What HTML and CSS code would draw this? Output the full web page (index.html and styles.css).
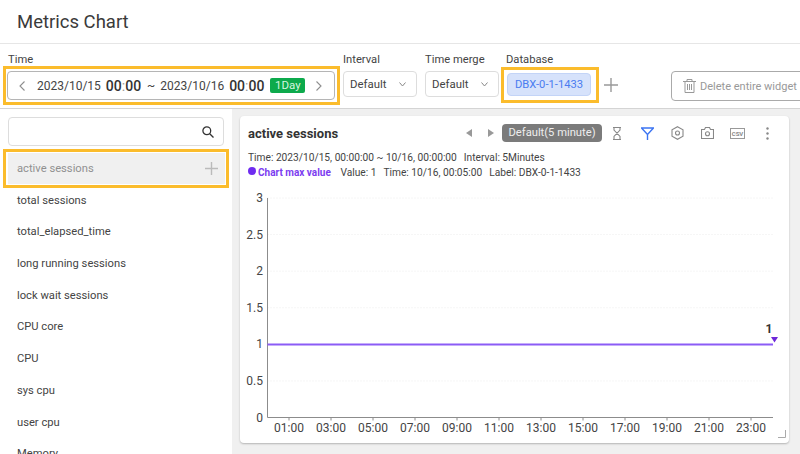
FILE: index.html
```html
<!DOCTYPE html>
<html lang="en">
<head>
    <meta charset="UTF-8">
    <meta name="viewport" content="width=device-width, initial-scale=1.0">
    <title>Metrics Chart</title>
    <link rel="stylesheet" href="styles.css">
</head>
<body>
    <header class="page-header">Metrics Chart</header>

    <section class="toolbar">
        <div class="field field-time">
            <label>Time</label>
            <div class="time-box marked">
                <svg class="arrow" width="6" height="10" viewBox="0 0 6 10"><path d="M5.500.5 1 5l4.500 4.500" /></svg>
                <span class="date">2023/10/15</span>
                <span class="clock">00<i>:</i>00</span>
                <span class="tilde">~</span>
                <span class="date">2023/10/16</span>
                <span class="clock">00<i>:</i>00</span>
                <span class="day-badge">1Day</span>
                <svg class="arrow" width="6" height="10" viewBox="0 0 6 10"><path d="M.5.5 5 5 .5 9.500" /></svg>
            </div>
        </div>
        <div class="field field-select">
            <label>Interval</label>
            <div class="select-box">Default
                <svg width="7" height="5" viewBox="0 0 7 5"><path d="M.5.5 3.500 4 6.500.5" /></svg>
            </div>
        </div>
        <div class="field field-select">
            <label>Time merge</label>
            <div class="select-box">Default
                <svg width="7" height="5" viewBox="0 0 7 5"><path d="M.5.5 3.500 4 6.500.5" /></svg>
            </div>
        </div>
        <div class="field field-db">
            <label>Database</label>
            <div class="db-row">
                <div class="db-chip marked">DBX-0-1-1433</div>
                <svg class="db-add" width="14" height="14" viewBox="0 0 14 14"><path d="M7 0v14M0 7h14" /></svg>
            </div>
        </div>
        <button class="delete-btn">
            <svg width="13" height="14" viewBox="0 0 13 14"><path d="M0 2.500h13M4 2.500V.5h5v2M2 2.500v11h9v-11M4.500 5v6M6.500 5v6M8.500 5v6" /></svg>
            Delete entire widget
        </button>
    </section>

    <main class="workspace">
        <aside class="sidebar">
            <div class="search-box">
                <svg width="12" height="12" viewBox="0 0 12 12"><circle cx="4.800" cy="4.800" r="3.900" /><path d="m7.700 7.700 3.800 3.800" /></svg>
            </div>
            <ul class="metric-list">
                <li class="metric-item selected marked">active sessions
                    <svg width="13" height="13" viewBox="0 0 13 13"><path d="M6.500 0v13M0 6.500h13" /></svg>
                </li>
                <li class="metric-item">total sessions</li>
                <li class="metric-item">total_elapsed_time</li>
                <li class="metric-item">long running sessions</li>
                <li class="metric-item">lock wait sessions</li>
                <li class="metric-item">CPU core</li>
                <li class="metric-item">CPU</li>
                <li class="metric-item">sys cpu</li>
                <li class="metric-item">user cpu</li>
                <li class="metric-item">Memory</li>
            </ul>
        </aside>

        <section class="chart-card">
            <div class="card-head">
                <h2>active sessions</h2>
                <div class="card-tools">
                    <svg class="step" width="6" height="8" viewBox="0 0 6 8"><path d="M6 0v8L0 4z" /></svg>
                    <svg class="step step-next" width="6" height="8" viewBox="0 0 6 8"><path d="M0 0v8l6-4z" /></svg>
                    <span class="merge-badge">Default(5 minute)</span>
                    <svg class="tool tool-hourglass" width="10" height="13" viewBox="0 0 10 13"><path d="M1 .5h8M1 12.500h8M2 .5v2.500l6 6.500v3M8 .5v2.500L2 9.500v3" /></svg>
                    <svg class="tool tool-filter" width="13" height="13" viewBox="0 0 13 13"><path d="M.5 1h12L6.500 7.500zM6.500 7.500V13" /></svg>
                    <svg class="tool tool-gear" width="13" height="14" viewBox="0 0 13 14"><path d="M6.500.7 12 3.800v6.400l-5.500 3.100L1 10.200V3.800z" /><circle cx="6.500" cy="7" r="2" /></svg>
                    <svg class="tool tool-camera" width="13" height="12" viewBox="0 0 13 12"><path d="M.5 2.500h3l1-2h4l1 2h3v9H.5z" /><circle cx="6.500" cy="6.700" r="2" /></svg>
                    <span class="tool-csv">CSV</span>
                    <svg class="tool tool-more" width="3" height="13" viewBox="0 0 3 13"><circle cx="1.500" cy="1.500" r="1.200" /><circle cx="1.500" cy="6.500" r="1.200" /><circle cx="1.500" cy="11.500" r="1.200" /></svg>
                </div>
            </div>
            <div class="card-info">
                <div><span>Time: 2023/10/15, 00:00:00 ~ 10/16, 00:00:00</span><span>Interval: 5Minutes</span></div>
                <div class="info-max">
                    <span class="max-name"><i class="max-dot"></i>Chart max value</span>
                    <span>Value: 1</span><span>Time: 10/16, 00:05:00</span><span>Label: DBX-0-1-1433</span>
                </div>
            </div>
            <svg class="chart" id="chart" width="549" height="264" viewBox="240 180 549 264"></svg>
            <svg class="resize-grip" width="8" height="8" viewBox="0 0 8 8"><path d="M7.500 0v7.500H0" /></svg>
        </section>
    </main>

    <script>
        // y축, x축, 값 라인 그리기
        const chart = document.getElementById('chart');
        const yTop = 198, yZero = 417.5, xLeft = 267.5, xRight = 773;
        let html = '';

        ['0', '0.5', '1', '1.5', '2', '2.5', '3'].forEach((label, i) => {
            const y = yZero - i * (yZero - yTop) / 6;
            if (i > 0) html += `<line class="grid" x1="${xLeft}" x2="${xRight}" y1="${y}" y2="${y}"/>`;
            html += `<text class="label" x="263" y="${y + 4}" text-anchor="end">${label}</text>`;
        });

        html += `<line class="axis" x1="${xLeft}" x2="${xLeft}" y1="${yTop}" y2="${yZero}"/>`;
        html += `<line class="axis" x1="${xLeft}" x2="${xRight}" y1="${yZero}" y2="${yZero}"/>`;

        for (let h = 1; h < 24; h += 2) {
            const x = 289 + (h - 1) * 21;
            const name = String(h).padStart(2, '0') + ':00';
            html += `<line class="axis" x1="${x}" x2="${x}" y1="${yZero}" y2="${yZero + 3}"/>`;
            html += `<text class="label" x="${x}" y="432" text-anchor="middle">${name}</text>`;
        }

        html += `<line class="series" x1="${xLeft}" x2="${xRight}" y1="344.500" y2="344.500"/>`;
        html += `<path class="marker" d="M771 337h7l-3.500 5.500z"/>`;
        html += `<text class="peak" x="769" y="333" text-anchor="middle">1</text>`;
        chart.innerHTML = html;
    </script>
</body>
</html>
```

FILE: styles.css
```css
* {
    box-sizing: border-box;
}

html, body {
    height: 100%;
}

body {
    margin: 0;
    overflow: hidden;
    display: flex;
    flex-direction: column;
    font-family: Roboto, "Noto Sans", sans-serif;
    color: #333;
    background: white;
}

svg {
    flex: none;
    fill: none;
    stroke: currentColor;
}

/* 노란 강조 박스 */
.marked {
    position: relative;
}

.marked::after {
    content: '';
    position: absolute;
    border: 3px solid #fbbc2c;
    pointer-events: none;
}

.page-header {
    height: 44px;
    flex: none;
    padding: 10px 17px 0;
    border-bottom: 1px solid #e6e6e6;
    font-size: 18.500px;
    line-height: 24px;
    color: #3a3a3a;
}

.toolbar {
    height: 65px;
    flex: none;
    display: flex;
    padding: 8px 0 0 8px;
    border-bottom: 1px solid #d4d4d4;
    white-space: nowrap;
}

.field {
    flex: none;
}

.field label {
    display: block;
    height: 19px;
    font-size: 11.200px;
    line-height: 15px;
    color: #444;
}

.field-time {
    width: 335px;
}

.time-box {
    width: 328px;
    height: 29px;
    margin-left: -1px;
    display: flex;
    align-items: center;
    padding: 0 11px;
    border: 1px solid #b5b5b5;
    border-radius: 4px;
    font-size: 12px;
    color: #444;
}

.time-box::after {
    inset: -6px -6px -6px -5px;
}

.arrow {
    color: #8e8e8e;
    stroke-width: 1.100;
}

.date {
    margin-left: 12px;
}

.tilde + .date {
    margin-left: 5px;
}

.clock {
    margin-left: 5px;
    font-size: 14px;
    font-weight: 500;
    color: #333;
}

.clock i {
    font-style: normal;
    font-weight: 400;
    color: #999;
}

.tilde {
    margin-left: 6px;
}

.day-badge {
    width: 35px;
    height: 15px;
    margin: 0 11px 0 6px;
    text-align: center;
    line-height: 15px;
    font-size: 11.500px;
    color: #d5f5df;
    background: #0daa4c;
    border-radius: 2px;
}

.field-select {
    width: 82px;
}

.select-box {
    width: 74px;
    height: 26px;
    display: flex;
    align-items: center;
    justify-content: space-between;
    padding: 0 10px 0 6px;
    border: 1px solid #ddd;
    border-radius: 4px;
    font-size: 11.400px;
    color: #444;
}

.select-box svg {
    color: #888;
}

.field-db {
    width: 164px;
}

.field-db label {
    margin-left: -1px;
}

.db-row {
    display: flex;
    align-items: center;
    padding-top: 2px;
}

.db-chip {
    width: 84px;
    height: 23px;
    line-height: 21px;
    text-align: center;
    border: 1px solid #c3d4f7;
    border-radius: 4px;
    background: #d6e2fb;
    font-size: 11.200px;
    color: #4a7cf0;
}

.db-chip::after {
    inset: -7px -9px -8px -7px;
}

.db-add {
    margin-left: 13px;
    color: #999;
    stroke-width: 1.400;
}

.delete-btn {
    height: 30px;
    width: 150px;
    margin-top: 19px;
    display: flex;
    align-items: center;
    gap: 4px;
    padding: 0 0 0 11px;
    border: 1px solid #aaa;
    border-radius: 4px;
    background: white;
    font-family: inherit;
    font-size: 11px;
    color: #999;
    flex: none;
}

.workspace {
    flex: 1;
    min-height: 0;
    display: flex;
    background: #f0f0f0;
}

.sidebar {
    width: 232px;
    flex: none;
    overflow: hidden;
    background: white;
    padding: 8px 8px 0;
}

.search-box {
    height: 29px;
    width: 216px;
    display: flex;
    align-items: center;
    justify-content: flex-end;
    padding-right: 9px;
    border: 1px solid #ddd;
    border-radius: 4px;
    color: #333;
    stroke-width: 1.300;
}

.metric-list {
    list-style: none;
    margin: 7px 0 0;
    padding: 0;
}

.metric-item {
    height: 31.700px;
    padding-left: 9px;
    line-height: 31px;
    font-size: 11.200px;
    color: #444;
}

.metric-item.selected {
    width: 217px;
    height: 31px;
    margin-bottom: 0.700px;
    display: flex;
    align-items: center;
    justify-content: space-between;
    padding-right: 7px;
    background: #f0f0f0;
    color: #909090;
}

.metric-item.selected::after {
    inset: -4px -4px -4px -5px;
}

.metric-item svg {
    color: #bbb;
    stroke-width: 1.400;
}

.chart-card {
    position: relative;
    width: 549px;
    height: 327px;
    margin: 7px 0 0 8px;
    flex: none;
    background: white;
    border-radius: 4px;
    box-shadow: 0 1px 2px rgba(0, 0, 0, 0.25);
}

.card-head {
    height: 31px;
    display: flex;
    align-items: center;
    justify-content: space-between;
    padding: 3px 20px 0 8px;
}

.card-head h2 {
    margin: 0;
    font-size: 13px;
    font-weight: 700;
    color: #333;
}

.card-tools {
    display: flex;
    align-items: center;
    color: #888;
}

.step {
    fill: #999;
    stroke: none;
}

.step-next {
    margin: 0 8px 0 16px;
}

.merge-badge {
    width: 100px;
    height: 18px;
    line-height: 18px;
    text-align: center;
    border-radius: 4px;
    background: #7b7b7b;
    font-size: 11.200px;
    color: #eee;
}

.tool {
    stroke-width: 1.100;
}

.tool-hourglass {
    margin-left: 10px;
}

.tool-filter {
    margin-left: 19px;
    color: #3b74f2;
    stroke-width: 1.400;
}

.tool-gear {
    margin-left: 17px;
}

.tool-camera {
    margin-left: 17px;
}

.tool-csv {
    margin-left: 16px;
    width: 15px;
    height: 11px;
    line-height: 10px;
    text-align: center;
    border: 1px solid #999;
    font-size: 6px;
    font-weight: 700;
    color: #888;
}

.tool-more {
    margin-left: 21px;
    fill: #888;
    stroke: none;
}

.card-info {
    padding: 3px 8px 0;
    font-size: 10.200px;
    line-height: 15px;
    color: #444;
    white-space: nowrap;
}

.card-info span + span {
    margin-left: 7px;
}

.max-name {
    font-weight: 700;
    font-size: 10px;
    color: #7c3df0;
}

.max-dot {
    display: inline-block;
    width: 8px;
    height: 8px;
    margin-right: 2px;
    border-radius: 50%;
    background: #6f2cf0;
    vertical-align: 1px;
}

.chart {
    position: absolute;
    left: 0;
    top: 64px;
}

.grid {
    stroke: #ececec;
    stroke-dasharray: 1 2;
}

.axis {
    stroke: #8c8c8c;
}

.series {
    stroke: #8b5cf6;
    stroke-width: 2;
}

.marker {
    fill: #6d28d9;
    stroke: none;
}

.label {
    fill: #444;
    stroke: none;
    font-size: 12px;
}

.peak {
    fill: #333;
    stroke: none;
    font-size: 12px;
    font-weight: 700;
}

.resize-grip {
    position: absolute;
    right: 3px;
    bottom: 5px;
    color: #aaa;
}
```
